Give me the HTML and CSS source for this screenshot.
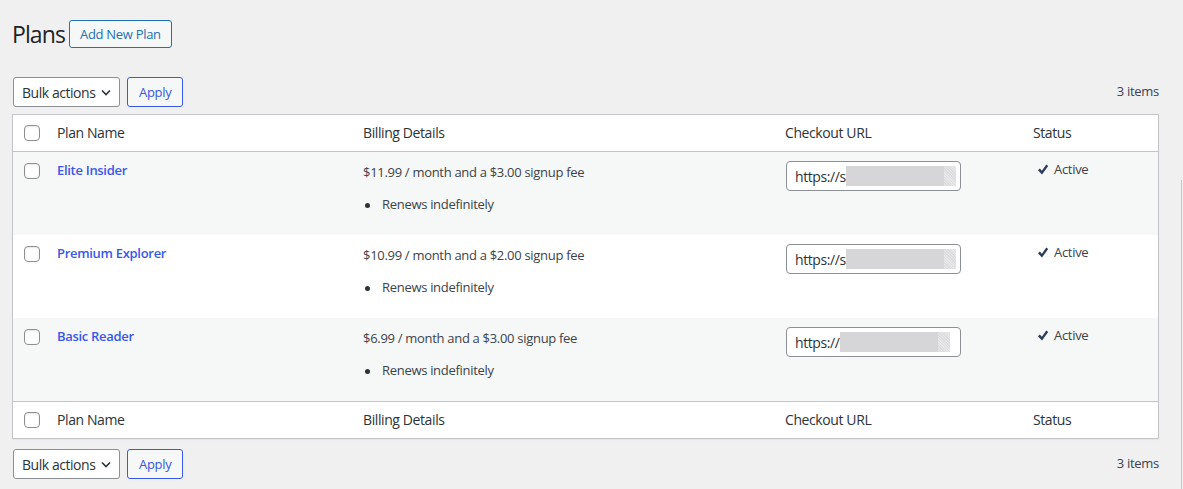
FILE: index.html
```html
<!DOCTYPE html>
<html lang="en">
<head>
<meta charset="utf-8">
<title>Plans</title>
<link rel="stylesheet" href="styles.css">
</head>
<body>
<div class="wrap">
  <div class="page-head">
    <h1 class="page-title">Plans</h1>
    <a class="btn-add" href="#">Add New Plan</a>
  </div>

  <div class="tablenav tablenav-top">
    <div class="actions">
      <div class="select"><span>Bulk actions</span><svg class="chev" viewBox="0 0 10 7" width="10" height="7"><path d="M1 1.5 5 5.5l4-4" fill="none" stroke="#2c3338" stroke-width="1.6"/></svg></div>
      <button class="btn-apply">Apply</button>
    </div>
    <div class="count">3 items</div>
  </div>

  <table class="plans">
    <colgroup>
      <col class="c-cb"><col class="c-name"><col class="c-bill"><col class="c-url"><col class="c-status">
    </colgroup>
    <thead>
      <tr>
        <th class="cb"><span class="check"></span></th>
        <th>Plan Name</th>
        <th>Billing Details</th>
        <th>Checkout URL</th>
        <th>Status</th>
      </tr>
    </thead>
    <tbody>
      <tr class="alt">
        <td class="cb"><span class="check"></span></td>
        <td class="name"><a href="#">Elite Insider</a></td>
        <td class="bill"><div class="price">$11.99 / month and a $3.00 signup fee</div><ul><li>Renews indefinitely</li></ul></td>
        <td class="url"><div class="url-box"><span class="url-text">https://s</span><span class="blur"></span><span class="blur-end"></span></div></td>
        <td class="status"><span class="st"><svg class="yes" viewBox="0 0 20 20" width="20" height="20"><path d="M5 10.3 6.8 8.6 8.9 10.8 13.3 4.6 15.2 6.1 9 14.5Z" fill="#2c3d5a"/></svg>Active</span></td>
      </tr>
      <tr>
        <td class="cb"><span class="check"></span></td>
        <td class="name"><a href="#">Premium Explorer</a></td>
        <td class="bill"><div class="price">$10.99 / month and a $2.00 signup fee</div><ul><li>Renews indefinitely</li></ul></td>
        <td class="url"><div class="url-box"><span class="url-text">https://s</span><span class="blur"></span><span class="blur-end"></span></div></td>
        <td class="status"><span class="st"><svg class="yes" viewBox="0 0 20 20" width="20" height="20"><path d="M5 10.3 6.8 8.6 8.9 10.8 13.3 4.6 15.2 6.1 9 14.5Z" fill="#2c3d5a"/></svg>Active</span></td>
      </tr>
      <tr class="alt">
        <td class="cb"><span class="check"></span></td>
        <td class="name"><a href="#">Basic Reader</a></td>
        <td class="bill"><div class="price">$6.99 / month and a $3.00 signup fee</div><ul><li>Renews indefinitely</li></ul></td>
        <td class="url"><div class="url-box"><span class="url-text">https://</span><span class="blur"></span><span class="blur-end"></span></div></td>
        <td class="status"><span class="st"><svg class="yes" viewBox="0 0 20 20" width="20" height="20"><path d="M5 10.3 6.8 8.6 8.9 10.8 13.3 4.6 15.2 6.1 9 14.5Z" fill="#2c3d5a"/></svg>Active</span></td>
      </tr>
    </tbody>
    <tfoot>
      <tr>
        <th class="cb"><span class="check"></span></th>
        <th>Plan Name</th>
        <th>Billing Details</th>
        <th>Checkout URL</th>
        <th>Status</th>
      </tr>
    </tfoot>
  </table>

  <div class="tablenav tablenav-bottom">
    <div class="actions">
      <div class="select"><span>Bulk actions</span><svg class="chev" viewBox="0 0 10 7" width="10" height="7"><path d="M1 1.5 5 5.5l4-4" fill="none" stroke="#2c3338" stroke-width="1.6"/></svg></div>
      <button class="btn-apply">Apply</button>
    </div>
    <div class="count">3 items</div>
  </div>
</div>
<div class="edge-line"></div>
</body>
</html>
```

FILE: styles.css
```css
* { box-sizing: border-box; }
html, body { margin: 0; padding: 0; }
body {
  background: #f0f0f1;
  color: #3c434a;
  font-family: "Segoe UI", "Open Sans", "Noto Sans", sans-serif;
  font-size: 13px;
  line-height: 1.5;
  letter-spacing: -0.3px;
  width: 1183px;
  height: 489px;
  overflow: hidden;
}
.wrap {
  padding: 19px 24px 0 12px;
}
.page-head {
  display: flex;
  align-items: center;
  height: 30px;
}
.page-title {
  margin: 0;
  font-size: 23px;
  font-weight: 400;
  line-height: 30px;
  letter-spacing: -0.9px;
  color: #1d2327;
}
.btn-add {
  margin-left: 4px;
  height: 28px;
  line-height: 26px;
  padding: 0 10px;
  border: 1px solid #2271b1;
  border-radius: 3px;
  background: #f6f7f7;
  color: #2271b1;
  text-decoration: none;
  font-size: 13px;
  white-space: nowrap;
}
.tablenav {
  display: flex;
  align-items: center;
  justify-content: space-between;
  height: 30px;
}
.tablenav-top { margin-top: 28px; margin-bottom: 7px; }
.tablenav-bottom { margin-top: 10px; }
.actions { display: flex; align-items: center; padding-left: 1px; }
.select {
  display: flex;
  align-items: center;
  justify-content: space-between;
  width: 107px;
  height: 30px;
  padding: 0 8px 0 8px;
  border: 1px solid #8c8f94;
  border-radius: 3px;
  background: #fff;
  color: #2c3338;
  font-size: 14px;
  letter-spacing: -0.45px;
  white-space: nowrap;
}
.chev { display: block; flex: none; }
.btn-apply {
  margin-left: 7px;
  height: 30px;
  padding: 0 11px;
  border: 1px solid #3858e9;
  border-radius: 3px;
  background: #f6f7f7;
  color: #3858e9;
  font-family: inherit;
  font-size: 13px;
  letter-spacing: -0.3px;
}
.count { font-size: 13px; color: #3c434a; }

.plans {
  width: 1147px;
  border-collapse: separate;
  border-spacing: 0;
  table-layout: fixed;
  border: 1px solid #c3c4c7;
  background: #fff;
  box-shadow: 0 1px 1px rgba(0,0,0,.04);
}
.c-cb { width: 34px; }
.c-name { width: 306px; }
.c-bill { width: 422px; }
.c-url { width: 248px; }
.c-status { width: 135px; }

.plans th {
  text-align: left;
  font-weight: 400;
  font-size: 14px;
  letter-spacing: -0.4px;
  color: #2c3338;
  padding: 8px 10px;
  line-height: 20px;
  height: 36px;
  vertical-align: middle;
}
.plans thead th { border-bottom: 1px solid #c3c4c7; }
.plans tfoot th { border-top: 1px solid #c3c4c7; }
.plans th.cb, .plans td.cb { padding: 0 0 0 11px; }
.check {
  display: block;
  width: 16px;
  height: 16px;
  border: 1px solid #8c8f94;
  border-radius: 4px;
  background: #fff;
  box-shadow: inset 0 1px 2px rgba(0,0,0,.1);
}
.plans td {
  vertical-align: top;
  padding: 9px 10px 8px;
  height: 83px;
  font-size: 13px;
}
.plans td.cb { padding-top: 11px; }
.plans tr.alt td { background: #f6f7f7; }
.name a {
  color: #3858e9;
  font-weight: 600;
  text-decoration: none;
  font-size: 13px;
}
.bill { color: #3c434a; }
.bill .price { margin-top: 2px; }
.bill ul { margin: 12px 0 0; padding: 0 0 0 19px; list-style: none; }
.bill li { position: relative; }
.bill li::before {
  content: "";
  position: absolute;
  left: -17px;
  top: 8px;
  width: 5px;
  height: 5px;
  border-radius: 50%;
  background: #2c3338;
}
.plans td.url { padding-left: 11px; padding-top: 9px; }
.url-box {
  display: flex;
  align-items: center;
  width: 175px;
  height: 30px;
  padding: 0 4px 0 8px;
  border: 1px solid #8c8f94;
  border-radius: 4px;
  background: #fff;
  font-size: 14px;
  letter-spacing: -0.4px;
  color: #2c3338;
}
.url-text { flex: none; }
.blur {
  flex: none;
  width: 98px;
  height: 20px;
  background: #d6d6d8;
}
.blur-end {
  flex: none;
  width: 12px;
  height: 20px;
  background: repeating-linear-gradient(45deg, #dcdcde 0 1px, #e8e8ea 1px 2px);
}
.status { color: #3c434a; }
.st { display: flex; align-items: center; margin-top: -1px; }
.yes { display: block; margin-right: 1px; flex: none; }
.edge-line {
  position: fixed;
  left: 1181px;
  top: 180px;
  width: 1px;
  height: 309px;
  background: #c3c4c7;
}
```
